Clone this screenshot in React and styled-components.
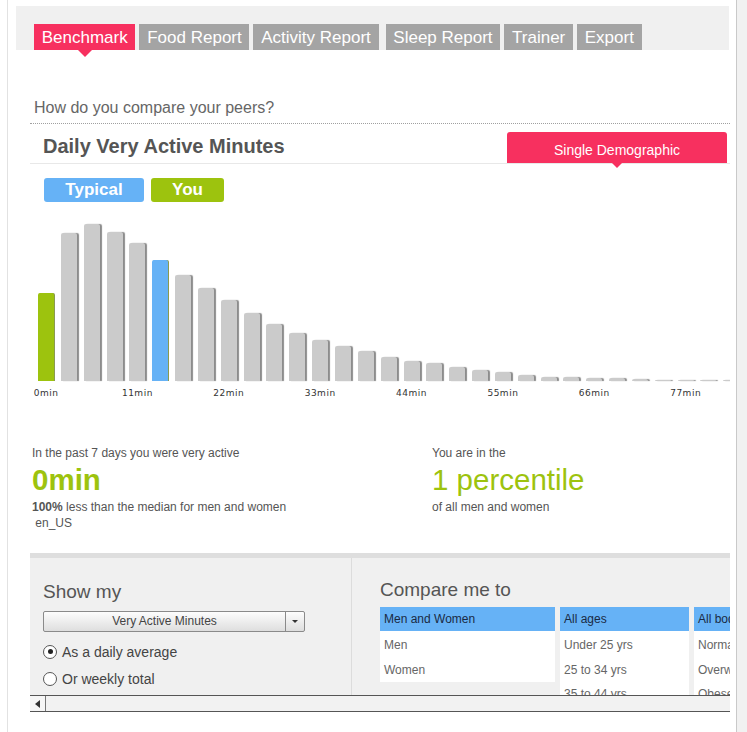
import React from 'react';
import styled, { createGlobalStyle } from 'styled-components';

const GlobalStyle = createGlobalStyle`
  html, body {
    margin: 0;
    padding: 0;
    background: #fff;
    font-family: "Liberation Sans", Arial, sans-serif;
  }
`;

const PINK = '#f7305f';
const GREEN = '#9dc30e';
const BLUE = '#66b2f6';

const Page = styled.div`
  display: flex;
  width: 747px;
  height: 732px;
  overflow: hidden;
`;

const Main = styled.div`
  width: 728px;
  margin-left: 7px;
  border-left: 1px solid #e2e2e2;
`;

const Rail = styled.div`
  width: 10px;
  border-left: 1px solid #c9c9c9;
  background: #f1f1f1;
`;

const TabBand = styled.div`
  margin: 6px 0 0 8px;
  width: 713px;
  height: 44px;
  background: #f0f0f0;
  display: flex;
  align-items: flex-end;
  padding-left: 18px;
  box-sizing: border-box;
  gap: 4px;
`;

const Tab = styled.div`
  position: relative;
  height: 26px;
  line-height: 27px;
  padding: 0 7.75px;
  font-size: 17px;
  color: #fff;
  background: ${p => (p.$active ? PINK : '#a4a4a4')};
  margin-right: ${p => p.$extra || 0}px;

  ${p => p.$active && `
    &:after {
      content: "";
      position: absolute;
      left: 50%;
      bottom: -7px;
      margin-left: -7px;
      border-left: 7px solid transparent;
      border-right: 7px solid transparent;
      border-top: 7px solid ${PINK};
    }
  `}
`;

const Body = styled.div`
  margin-left: 22px;
  width: 700px;
`;

const Question = styled.div`
  margin-top: 49px;
  padding: 0 0 6px 4px;
  font-size: 16px;
  color: #666;
  border-bottom: 1px dotted #a0a0a0;
`;

const TitleRow = styled.div`
  display: flex;
  justify-content: space-between;
  align-items: flex-end;
  height: 39px;
  border-bottom: 1px solid #e8e8e8;
`;

const Title = styled.h2`
  margin: 0 0 5px 13px;
  font-size: 20px;
  font-weight: bold;
  color: #555;
`;

const DemoButton = styled.div`
  position: relative;
  width: 220px;
  height: 31px;
  margin-right: 3px;
  background: ${PINK};
  border-radius: 3px 3px 0 0;
  color: #fff;
  font-size: 14px;
  text-align: center;
  line-height: 36px;

  &:after {
    content: "";
    position: absolute;
    left: 50%;
    bottom: -5px;
    margin-left: -5px;
    border-left: 5px solid transparent;
    border-right: 5px solid transparent;
    border-top: 5px solid ${PINK};
  }
`;

const Legend = styled.div`
  display: flex;
  gap: 7px;
  margin: 14px 0 0 14px;
`;

const Badge = styled.div`
  width: ${p => p.$w}px;
  height: 24px;
  line-height: 24px;
  border-radius: 3px;
  background: ${p => p.$color};
  color: #fff;
  font-size: 17px;
  font-weight: bold;
  text-align: center;
`;

const Chart = styled.div`
  display: flex;
  gap: 6.85px;
  padding-left: 8px;
  margin-top: 9px;
  overflow: hidden;
`;

const Column = styled.div`
  display: flex;
  flex-direction: column;
  align-items: center;
  flex: 0 0 16px;
  width: 16px;
  min-width: 0;
`;

const Slot = styled.div`
  height: 170px;
  width: 16px;
  display: flex;
  align-items: flex-end;
`;

const Bar = styled.div`
  width: 16px;
  background: ${p => p.$color || '#cbcbcb'};
  border-radius: 2px 2px 0 0;
  box-shadow: ${p => (p.$color ? '1px 0 0 #8a9a50' : '2px 0 1px #8c8c8c')};
`;

const Tick = styled.div`
  height: 12px;
  margin-top: 6px;
  line-height: 12px;
  font-family: "DejaVu Sans", Verdana, sans-serif;
  font-size: 9px;
  letter-spacing: 0.5px;
  color: #333;
  white-space: nowrap;
`;

const Stats = styled.div`
  display: grid;
  grid-template-columns: 400px 1fr;
  margin-top: 46px;
  padding-left: 2px;
`;

const Small = styled.div`
  font-size: 12px;
  line-height: 16px;
  color: #555;
  white-space: pre;
`;

const Big = styled.div`
  font-size: 29.5px;
  line-height: 38px;
  color: ${GREEN};
  font-weight: ${p => (p.$bold ? 'bold' : 'normal')};
`;

const Panel = styled.div`
  margin-top: 22px;
  border-top: 5px solid #dedede;
  background: #f0f0f0;
  height: 137px;
  overflow: hidden;
  display: grid;
  grid-template-columns: 322px 1fr;
`;

const Pane = styled.div`
  padding: ${p => p.$pad};
  border-right: ${p => (p.$divided ? '1px solid #dcdcdc' : 'none')};
  overflow: hidden;
`;

const PaneTitle = styled.div`
  font-size: 19px;
  line-height: 22px;
  color: #555;
`;

const Select = styled.div`
  display: flex;
  width: 262px;
  height: 21px;
  margin-top: 8px;
  box-sizing: border-box;
  border: 1px solid #8a8a8a;
  border-radius: 2px;
  background: linear-gradient(#fdfdfd, #dedede);
  font-size: 12px;
  color: #444;
`;

const SelectText = styled.div`
  flex: 1;
  text-align: center;
  line-height: 19px;
`;

const SelectArrow = styled.div`
  width: 18px;
  border-left: 1px solid #8a8a8a;
  display: flex;
  align-items: center;
  justify-content: center;

  &:after {
    content: "";
    border-left: 3px solid transparent;
    border-right: 3px solid transparent;
    border-top: 3px solid #333;
  }
`;

const Radios = styled.div`
  margin-top: 6px;
`;

const RadioRow = styled.label`
  display: flex;
  align-items: center;
  gap: 5px;
  height: 27px;
  font-size: 14px;
  color: #444;
`;

const RadioDot = styled.span`
  width: 12px;
  height: 12px;
  border: 1px solid #555;
  border-radius: 50%;
  background: #fff;
  display: flex;
  align-items: center;
  justify-content: center;

  &:after {
    content: "";
    width: 5px;
    height: 5px;
    border-radius: 50%;
    background: ${p => (p.$checked ? '#222' : 'transparent')};
  }
`;

const Lists = styled.div`
  display: flex;
  gap: 5px;
  margin-top: 6px;
  width: 360px;
`;

const List = styled.div`
  flex: 0 0 ${p => p.$w}px;
  background: #fff;
  align-self: flex-start;
  padding-bottom: 2px;
`;

const Item = styled.div`
  height: ${p => (p.$selected ? 24 : 24.5)}px;
  line-height: ${p => (p.$selected ? 24 : 28)}px;
  padding-left: 4px;
  font-size: 12px;
  color: ${p => (p.$selected ? '#1a2a44' : '#666')};
  background: ${p => (p.$selected ? BLUE : 'transparent')};
  white-space: nowrap;
  overflow: hidden;
`;

const HScroll = styled.div`
  display: flex;
  height: 15px;
  border-top: 1px solid #555;
  border-bottom: 1px solid #555;
  background: #f2f2f2;
`;

const ScrollButton = styled.div`
  width: 15px;
  border-right: 1px solid #777;
  background: #f6f6f6;
  display: flex;
  align-items: center;
  justify-content: center;

  &:after {
    content: "";
    border-top: 4px solid transparent;
    border-bottom: 4px solid transparent;
    border-right: 5px solid #333;
  }
`;

const tabs = [
  { label: 'Benchmark', active: true },
  { label: 'Food Report' },
  { label: 'Activity Report', extra: 3 },
  { label: 'Sleep Report' },
  { label: 'Trainer' },
  { label: 'Export' },
];

const heights = [88, 148, 157, 149, 138, 121, 106, 93, 81, 68, 57, 48, 41, 35, 30, 24, 20, 18, 14, 11, 9, 6, 4, 4, 3, 3, 2, 1, 1, 1, 1];

const barColor = i => (i === 0 ? GREEN : i === 5 ? BLUE : undefined);

const lists = [
  { w: 175, items: ['Men and Women', 'Men', 'Women'] },
  { w: 129, items: ['All ages', 'Under 25 yrs', '25 to 34 yrs', '35 to 44 yrs'] },
  { w: 80, items: ['All body types', 'Normal', 'Overweight', 'Obese'] },
];

export default function App() {
  return (
    <Page>
      <GlobalStyle />
      <Main>
        <TabBand>
          {tabs.map(t => (
            <Tab key={t.label} $active={t.active} $extra={t.extra}>{t.label}</Tab>
          ))}
        </TabBand>

        <Body>
          <Question>How do you compare your peers?</Question>

          <TitleRow>
            <Title>Daily Very Active Minutes</Title>
            <DemoButton>Single Demographic</DemoButton>
          </TitleRow>

          <Legend>
            <Badge $w={100} $color={BLUE}>Typical</Badge>
            <Badge $w={73} $color={GREEN}>You</Badge>
          </Legend>

          <Chart>
            {heights.map((h, i) => (
              <Column key={i}>
                <Slot>
                  <Bar $color={barColor(i)} style={{ height: h }} />
                </Slot>
                <Tick>{i % 4 === 0 ? `${(i / 4) * 11}min` : ''}</Tick>
              </Column>
            ))}
          </Chart>

          <Stats>
            <div>
              <Small>In the past 7 days you were very active</Small>
              <Big $bold>0min</Big>
              <Small><b>100%</b> less than the median for men and women</Small>
              <Small> en_US</Small>
            </div>
            <div>
              <Small>You are in the</Small>
              <Big>1 percentile</Big>
              <Small>of all men and women</Small>
            </div>
          </Stats>

          <Panel>
            <Pane $pad="23px 0 0 13px" $divided>
              <PaneTitle>Show my</PaneTitle>
              <Select>
                <SelectText>Very Active Minutes</SelectText>
                <SelectArrow />
              </Select>
              <Radios>
                <RadioRow><RadioDot $checked />As a daily average</RadioRow>
                <RadioRow><RadioDot />Or weekly total</RadioRow>
              </Radios>
            </Pane>
            <Pane $pad="21px 0 0 28px">
              <PaneTitle>Compare me to</PaneTitle>
              <Lists>
                {lists.map((l, li) => (
                  <List key={li} $w={l.w}>
                    {l.items.map((it, ii) => (
                      <Item key={it} $selected={ii === 0}>{it}</Item>
                    ))}
                  </List>
                ))}
              </Lists>
            </Pane>
          </Panel>
          <HScroll>
            <ScrollButton />
          </HScroll>
        </Body>
      </Main>
      <Rail />
    </Page>
  );
}
